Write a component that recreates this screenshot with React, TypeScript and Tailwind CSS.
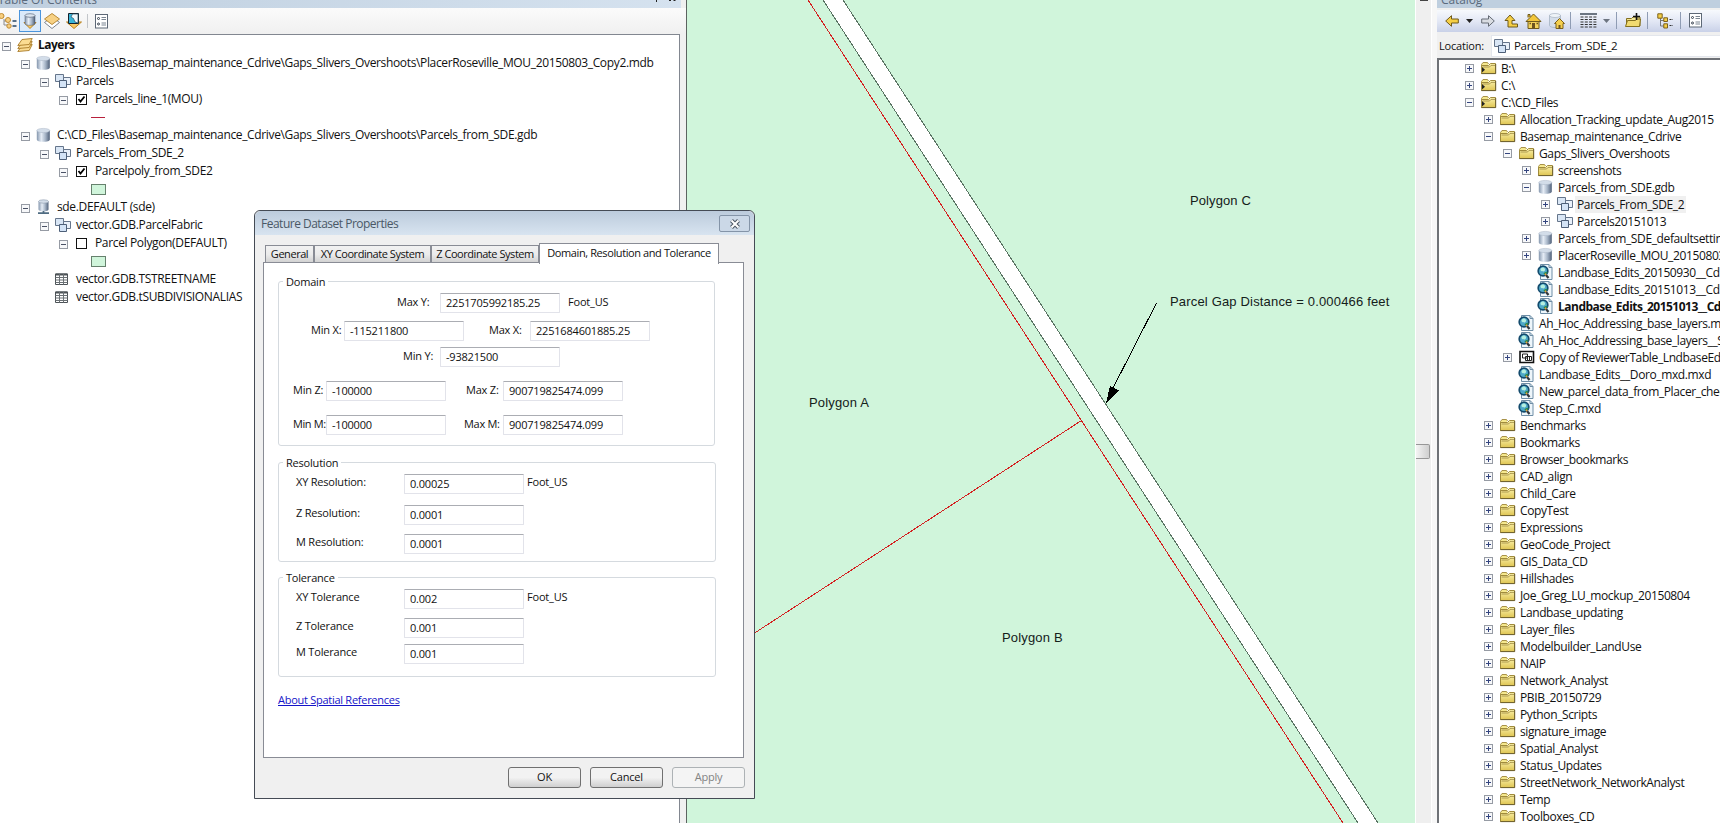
import type { ReactNode } from "react";
import clsx from "clsx";

type IconName = "layers" | "db" | "sde" | "dataset" | "table" | "folder" | "link" | "mxd" | "toolbox";

type TocRow = {
  level: number;
  label?: string;
  icon?: IconName;
  check?: boolean;
  symbol?: "line" | "patch";
  bold?: boolean;
  leaf?: boolean;
};

type CatalogRow = {
  level: number;
  label: string;
  icon: IconName;
  open?: boolean;
  leaf?: boolean;
  bold?: boolean;
  selected?: boolean;
};

const TOC: TocRow[] = [
  { level: 0, label: "Layers", icon: "layers", bold: true },
  {
    level: 1,
    label:
      "C:\\CD_Files\\Basemap_maintenance_Cdrive\\Gaps_Slivers_Overshoots\\PlacerRoseville_MOU_20150803_Copy2.mdb",
    icon: "db",
  },
  { level: 2, label: "Parcels", icon: "dataset" },
  { level: 3, label: "Parcels_line_1(MOU)", check: true },
  { level: 4, symbol: "line" },
  {
    level: 1,
    label: "C:\\CD_Files\\Basemap_maintenance_Cdrive\\Gaps_Slivers_Overshoots\\Parcels_from_SDE.gdb",
    icon: "db",
  },
  { level: 2, label: "Parcels_From_SDE_2", icon: "dataset" },
  { level: 3, label: "Parcelpoly_from_SDE2", check: true },
  { level: 4, symbol: "patch" },
  { level: 1, label: "sde.DEFAULT (sde)", icon: "sde" },
  { level: 2, label: "vector.GDB.ParcelFabric", icon: "dataset" },
  { level: 3, label: "Parcel Polygon(DEFAULT)", check: false },
  { level: 4, symbol: "patch" },
  { level: 2, label: "vector.GDB.TSTREETNAME", icon: "table", leaf: true },
  { level: 2, label: "vector.GDB.tSUBDIVISIONALIAS", icon: "table", leaf: true },
];

const FOLDERS = [
  "Benchmarks",
  "Bookmarks",
  "Browser_bookmarks",
  "CAD_align",
  "Child_Care",
  "CopyTest",
  "Expressions",
  "GeoCode_Project",
  "GIS_Data_CD",
  "Hillshades",
  "Joe_Greg_LU_mockup_20150804",
  "Landbase_updating",
  "Layer_files",
  "Modelbuilder_LandUse",
  "NAIP",
  "Network_Analyst",
  "PBIB_20150729",
  "Python_Scripts",
  "signature_image",
  "Spatial_Analyst",
  "Status_Updates",
  "StreetNetwork_NetworkAnalyst",
  "Temp",
  "Toolboxes_CD",
];

const CATALOG: CatalogRow[] = [
  { level: 0, label: "B:\\", icon: "link" },
  { level: 0, label: "C:\\", icon: "link" },
  { level: 0, label: "C:\\CD_Files", icon: "link", open: true },
  { level: 1, label: "Allocation_Tracking_update_Aug2015", icon: "folder" },
  { level: 1, label: "Basemap_maintenance_Cdrive", icon: "folder", open: true },
  { level: 2, label: "Gaps_Slivers_Overshoots", icon: "folder", open: true },
  { level: 3, label: "screenshots", icon: "folder" },
  { level: 3, label: "Parcels_from_SDE.gdb", icon: "db", open: true },
  { level: 4, label: "Parcels_From_SDE_2", icon: "dataset", selected: true },
  { level: 4, label: "Parcels20151013", icon: "dataset" },
  { level: 3, label: "Parcels_from_SDE_defaultsettings.gdb", icon: "db" },
  { level: 3, label: "PlacerRoseville_MOU_20150803.mdb", icon: "db" },
  { level: 3, label: "Landbase_Edits_20150930__Cdrive.mxd", icon: "mxd", leaf: true },
  { level: 3, label: "Landbase_Edits_20151013__Cdrive.mxd", icon: "mxd", leaf: true },
  { level: 3, label: "Landbase_Edits_20151013__Cdrive.mxd", icon: "mxd", leaf: true, bold: true },
  { level: 2, label: "Ah_Hoc_Addressing_base_layers.mxd", icon: "mxd", leaf: true },
  { level: 2, label: "Ah_Hoc_Addressing_base_layers__SDE.mxd", icon: "mxd", leaf: true },
  { level: 2, label: "Copy of ReviewerTable_LndbaseEdits", icon: "toolbox" },
  { level: 2, label: "Landbase_Edits__Doro_mxd.mxd", icon: "mxd", leaf: true },
  { level: 2, label: "New_parcel_data_from_Placer_check.mxd", icon: "mxd", leaf: true },
  { level: 2, label: "Step_C.mxd", icon: "mxd", leaf: true },
  ...FOLDERS.map((label): CatalogRow => ({ level: 1, label, icon: "folder" })),
];

function Svg({ w = 16, h = 16, children }: { w?: number; h?: number; children: ReactNode }) {
  return (
    <svg width={w} height={h} viewBox={`0 0 ${w} ${h}`} fill="none" className="block shrink-0">
      {children}
    </svg>
  );
}

function Gradients() {
  return (
    <svg width="0" height="0" className="absolute">
      <defs>
        <linearGradient id="steel" x1="0" x2="1" y1="0" y2="0">
          <stop offset="0" stopColor="#8496ad" />
          <stop offset="0.35" stopColor="#e6edf6" />
          <stop offset="0.65" stopColor="#a9b7c9" />
          <stop offset="1" stopColor="#4f6079" />
        </linearGradient>
        <linearGradient id="gold" x1="0" x2="0" y1="0" y2="1">
          <stop offset="0" stopColor="#fbf2ac" />
          <stop offset="1" stopColor="#dfc552" />
        </linearGradient>
      </defs>
    </svg>
  );
}

function FolderShape() {
  return (
    <>
      <path d="M.5 13.5V4.5L2 2.5h4.500l1 1.500" fill="#f5e88d" stroke="#a8924a" />
      <path d="M.5 13.500v-8h7l2-2h5v10z" fill="url(#gold)" stroke="#a08b3c" />
      <path d="M1.500 7h7l1.500-1.600h4" stroke="#8f7a34" strokeWidth="0.700" />
      <path d="M.5 13.600h14.200V4" stroke="#6e6030" />
    </>
  );
}

function Icon({ name }: { name: IconName }) {
  switch (name) {
    case "layers":
      return (
        <Svg>
          {[6, 3, 0].map((y) => (
            <path
              key={y}
              d={`M.8 ${y + 8.500} 5 ${y + 2.500}l10.200-1-3 6z`}
              fill="#fbdc92"
              stroke="#a97a26"
              strokeWidth="0.900"
            />
          ))}
        </Svg>
      );
    case "db":
      return (
        <Svg>
          <path d="M.8 3.500v9c0 1.500 3 2.300 6.500 2.300s6.500-.8 6.500-2.300v-9z" fill="url(#steel)" />
          <ellipse cx="7.300" cy="3.500" rx="6.500" ry="2.100" fill="#d3dde9" stroke="#a9b5c4" strokeWidth="0.500" />
        </Svg>
      );
    case "sde":
      return (
        <Svg>
          <path d="M2.500 2.500v8c0 1.200 2 1.800 5 1.800s5-.6 5-1.800v-8z" fill="url(#steel)" />
          <ellipse cx="7.500" cy="2.500" rx="5" ry="1.700" fill="#d3dde9" stroke="#8d9bad" strokeWidth="0.600" />
          <path d="M7.500 12v2M2 14.200h11" stroke="#4f6c82" strokeWidth="1.800" />
        </Svg>
      );
    case "dataset":
      return (
        <Svg>
          <path d="M.5 1.500h8v7h-8z" fill="#d9e6f5" stroke="#65758b" />
          <path d="M8.500 4.500h7v7h-7z" fill="#eaf1fa" stroke="#65758b" />
          <path d="M4.500 7.500h7v7h-7z" fill="#d3e3f6" stroke="#4d5f78" />
        </Svg>
      );
    case "table":
      return (
        <Svg>
          <path d="M.5 3h12v10.500H.5z" fill="#fff" stroke="#4c5256" />
          <path d="M.5 3.500h12" stroke="#4c5256" strokeWidth="2" />
          <path d="M.5 6.500h12M.5 9h12M.5 11.500h12M4.500 3v10.500M8.500 3v10.500" stroke="#6b7175" />
        </Svg>
      );
    case "folder":
      return (
        <Svg>
          <FolderShape />
        </Svg>
      );
    case "link":
      return (
        <Svg>
          <FolderShape />
          <path d="M1 7l3 2.700-3 2.800z" fill="#222" />
        </Svg>
      );
    case "mxd":
      return (
        <Svg>
          <path d="M3.500.5h8.500l3 3v12H3.500z" fill="#eef6fb" stroke="#6f8ea6" />
          <path d="M12 .5v3h3" stroke="#6f8ea6" />
          <circle cx="6" cy="7" r="4.800" fill="#4fa9c9" stroke="#134a6c" strokeWidth="1.700" />
          <path d="M3.500 5c2-2.500 4-1.500 4.500 0s-1 3-2 2.500-2.500 0-2.500-2.500z" fill="#b5efdf" />
          <path d="M7 10c1-1 2.500-1 3-2" stroke="#2a8a46" strokeWidth="1.600" />
          <path d="M9 11l2.500 3" stroke="#30363c" strokeWidth="2.200" />
          <path d="M8 9.800l1.200 1.300" stroke="#e5a03a" strokeWidth="1.600" />
        </Svg>
      );
    case "toolbox":
      return (
        <Svg>
          <path d="M1 2.500h13.500v11H1z" fill="#fff" stroke="#111" strokeWidth="1.600" />
          <path d="M3.500 5h5v4h-5zM6.500 7.500h6v4h-6z" fill="#fff" stroke="#222" />
          <path d="M8.500 7.500v4M10.500 7.500v4" stroke="#222" />
        </Svg>
      );
  }
}

function Expander({ open, blue }: { open?: boolean; blue?: boolean }) {
  return (
    <Svg w={9} h={9}>
      <rect x="0.5" y="0.5" width="8" height="8" fill="#f7f8fa" stroke="#969ba4" />
      <path d={open ? "M2 4.500h5" : "M2 4.500h5M4.500 2v5"} stroke={blue ? "#34457f" : "#4a5266"} />
    </Svg>
  );
}

function Checkbox({ checked }: { checked: boolean }) {
  return (
    <Svg w={11} h={11}>
      <rect x="0.5" y="0.5" width="10" height="10" fill="#fff" stroke="#111" />
      {checked && <path d="M2.500 5l2 2.500 4-5" stroke="#000" strokeWidth="1.800" />}
    </Svg>
  );
}

function OptionsIcon() {
  return (
    <Svg w={13} h={15}>
      <rect x="0.5" y="0.5" width="12" height="13.500" fill="#fff" stroke="#5d6876" />
      <circle cx="3.500" cy="4.500" r="1" stroke="#35404d" />
      <circle cx="3.500" cy="10" r="1" stroke="#35404d" />
      <path d="M6.500 3.500H11M6.500 5.500H11M6.500 9H11M6.500 11H11" stroke="#7b8591" />
    </Svg>
  );
}

function TocToolbar() {
  return (
    <div className="flex h-[26px] items-center bg-linear-to-b from-[#fbfbfb] to-[#f0f0f0]">
      <Svg w={17}>
        <path d="M4 6v6h6M4 8h6" stroke="#8d8d8d" />
        <circle cx="1.500" cy="3" r="2.500" fill="#f8cf7f" stroke="#c08b30" />
        <circle cx="8" cy="7" r="2.500" fill="#f8cf7f" stroke="#c08b30" />
        <circle cx="9" cy="13" r="2.200" fill="#f8cf7f" stroke="#c08b30" />
        <path d="M12.500 8h4M12.500 13h4" stroke="#234466" strokeWidth="1.600" />
      </Svg>
      <div className="ml-0.5 flex h-[22px] w-[22px] items-center justify-center border border-[#4a94dc] bg-[#dbeafa]">
        <Svg>
          <path d="M2 9.500L8 15.500l6-6z" fill="#f8c865" stroke="#b98322" />
          <path d="M3 2.500v8c0 1.200 2 1.800 5 1.800s5-.6 5-1.800v-8z" fill="url(#steel)" stroke="#49566b" strokeWidth="0.500" />
          <ellipse cx="8" cy="2.500" rx="5" ry="1.800" fill="#dbe5ef" stroke="#49566b" strokeWidth="0.600" />
        </Svg>
      </div>
      <div className="ml-[3px]">
        <Svg>
          <path d="M.5 9.500L8 15.500l7.500-6L8 4z" fill="#fff" stroke="#7b8490" />
          <path d="M.5 6L8 .5 15.500 6 8 11.500z" fill="#f7d184" stroke="#b88a35" />
        </Svg>
      </div>
      <div className="ml-1.5">
        <Svg>
          <path d="M.5 9L8 15.500 15.500 9z" fill="#f8c865" stroke="#b98322" />
          <path d="M2.500.5h10v10h-10z" fill="#39b5d8" stroke="#16222c" />
          <path d="M6.500 1h5.500v9L9 9 7.500 5.500 5 4z" fill="#f3f9fc" stroke="#24506a" strokeWidth="0.700" />
        </Svg>
      </div>
      <div className="ml-[5px] h-3.5 w-px bg-[#c3c6ca]" />
      <div className="ml-[7px]">
        <OptionsIcon />
      </div>
    </div>
  );
}

function TocTreeRow({ row }: { row: TocRow }) {
  return (
    <div
      className="flex h-[18px] shrink-0 items-center"
      style={{ paddingLeft: row.level === 4 ? 91 : 2 + row.level * 19 }}
    >
      {row.symbol === "line" && <div className="h-px w-3.5 bg-[#b8203c]" />}
      {row.symbol === "patch" && <div className="h-[11px] w-[15px] border border-[#66816d] bg-[#d0f5db]" />}
      {row.label && (
        <>
          <div className="mt-0.5 w-[15px] shrink-0">{!row.leaf && <Expander open />}</div>
          <div className="w-[21px] shrink-0">
            {row.icon ? (
              <Icon name={row.icon} />
            ) : (
              <div className="ml-0.5 mt-px">
                <Checkbox checked={row.check === true} />
              </div>
            )}
          </div>
          <span className={clsx("whitespace-pre", row.bold ? "font-bold tracking-[-0.5px]" : "tracking-[-0.35px]")}>
            {row.label}
          </span>
        </>
      )}
    </div>
  );
}

function TableOfContents() {
  return (
    <div className="flex w-[686px] shrink-0 flex-col bg-[#f0f0f0] font-['Open_Sans','Noto_Sans',sans-serif] text-[12px] text-[#111]">
      <div className="flex h-2 w-[681px] items-end justify-between overflow-hidden bg-linear-to-r from-[#bfcfdf] to-[#d5e2ef] text-[#5a6a7c]">
        <span className="-ml-0.5 leading-4 tracking-[-0.1px]">Table Of Contents</span>
        <Svg w={28} h={8}>
          <path d="M3.500 0v2M16 .5h2M20.500.5h2" stroke="#222" />
        </Svg>
      </div>
      <TocToolbar />
      <div className="flex w-[680px] grow flex-col border-t border-r border-[#828790] bg-white pt-px">
        {TOC.map((row, i) => (
          <TocTreeRow key={i} row={row} />
        ))}
      </div>
    </div>
  );
}

function MapView() {
  return (
    <div className="relative w-[729px] shrink-0 border-l border-[#5c6360] bg-[#d0f5db] font-['Liberation_Sans',Arial,sans-serif] text-[13px] text-[#14201a]">
      <svg
        width="728"
        height="823"
        viewBox="687 0 728 823"
        fill="none"
        shapeRendering="crispEdges"
        className="block"
      >
        <path d="M823 0h20l535 823h-20z" fill="#fff" />
        <path d="M823 0l535 823M843 0l535 823" stroke="#5a7363" />
        <path d="M808 0l535 823M1081.500 420.500L750 636" stroke="#d42020" />
        <path d="M1156.500 303l-46 90" stroke="#000" />
        <path d="M1106 403l4-17 9 4.500z" fill="#000" />
      </svg>
      <span className="absolute top-[193px] left-[503px] leading-4 tracking-[0.1px]">Polygon C</span>
      <span className="absolute top-[294px] left-[483px] leading-4 whitespace-nowrap tracking-[0.17px]">
        Parcel Gap Distance = 0.000466 feet
      </span>
      <span className="absolute top-[395px] left-[122px] leading-4 tracking-[0.17px]">Polygon A</span>
      <span className="absolute top-[630px] left-[315px] leading-4 tracking-[0.17px]">Polygon B</span>
    </div>
  );
}

function Splitter() {
  return (
    <div className="flex w-[22px] shrink-0 bg-[#f7f7f7]">
      <div className="flex w-[17px] flex-col border-x border-white bg-[#efefef]">
        <div className="ml-1 h-px w-2 bg-[#444]" />
        <div className="mt-[443px] h-[15px] w-3.5 rounded-r-xs border border-l-0 border-[#979797] bg-linear-to-r from-[#f4f4f4] to-[#cfcfcf]" />
      </div>
    </div>
  );
}

function Separator() {
  return <div className="h-[17px] w-px shrink-0 bg-[#8f9cb4]" />;
}

function Caret({ color }: { color: string }) {
  return (
    <Svg w={7} h={4}>
      <path d="M0 0h7L3.500 4z" fill={color} />
    </Svg>
  );
}

function CatalogToolbar() {
  return (
    <div className="mt-0.5 flex h-[22px] items-center bg-linear-to-b from-[#f7f9fd] via-[#e3e8f5] to-[#c9d1e8] pl-2">
      <Svg w={14} h={12}>
        <path d="M.7 6L6.500.7V4h6.800v4H6.500v3.300z" fill="#f6cf45" stroke="#6f5a1c" />
      </Svg>
      <div className="ml-[7px]">
        <Caret color="#222" />
      </div>
      <div className="ml-2">
        <Svg w={14} h={12}>
          <path d="M13.300 6L7.500.7V4H.7v4h6.800v3.300z" fill="#d9dce2" stroke="#666c76" />
        </Svg>
      </div>
      <div className="ml-[9px]">
        <Svg w={15} h={14}>
          <path d="M1 6.500L6 1l5 5.500H8V10h5.500v3H4V6.500z" fill="#f6cf45" stroke="#6f5a1c" />
        </Svg>
      </div>
      <div className="ml-1.5">
        <Svg w={17}>
          <path d="M3 7.500h11v8H3z" fill="#f3d35c" stroke="#6f5a1c" />
          <path d="M1 8.500L8.500 1 16 8.500z" fill="#f2c63a" stroke="#6f5a1c" />
          <path d="M3 4.500V1.500h2V4" fill="#e8b93a" stroke="#6f5a1c" />
          <path d="M7 10h3v5.500H7z" fill="#6b5320" />
          <path d="M4.500 10.500h1.500M11.500 10.500H13" stroke="#6b5320" strokeWidth="1.500" />
        </Svg>
      </div>
      <div className="ml-[7px]">
        <Svg>
          <path d="M.5 2.500v10c0 1.200 2.500 2 5.500 2s5.500-.8 5.500-2v-10z" fill="#d5deea" stroke="#a5b2c3" strokeWidth="0.800" />
          <ellipse cx="6" cy="2.500" rx="5.500" ry="2" fill="#eef3f8" stroke="#9fabba" strokeWidth="0.600" />
          <path d="M5.500 10.500L10.500 5.500l5 5h-1.500v5h-7v-5z" fill="#f5cf4e" stroke="#7c611c" />
          <path d="M9.500 12h2v3.500h-2z" fill="#6b5320" />
        </Svg>
      </div>
      <div className="mx-[5px]">
        <Separator />
      </div>
      <div className="ml-1">
        <Svg w={17} h={15}>
          <path d="M0 1h17" stroke="#4b5563" strokeWidth="1.600" />
          <path d="M.5 4h16M.5 6.500h16M.5 9h16M.5 11.500h16M.5 14h16" stroke="#333" strokeDasharray="3 1.300" />
        </Svg>
      </div>
      <div className="ml-1.5">
        <Caret color="#6c7480" />
      </div>
      <div className="mr-2 ml-1.5">
        <Separator />
      </div>
      <Svg w={17} h={15}>
        <path d="M1.500 13V5.500h5l1.500-1.500h7V13z" fill="url(#gold)" stroke="#84701f" />
        <path d="M.5 13.500l2-6h8l1.500-1.500h3.500l-1 7.500z" fill="#f1da70" stroke="#84701f" />
        <path d="M11.500 0v7M8 3.500h7" stroke="#111" strokeWidth="1.600" />
      </Svg>
      <div className="mr-[9px] ml-[5px]">
        <Separator />
      </div>
      <Svg w={17}>
        <path d="M3.500 5v8h5M3.500 7.500h4" stroke="#777" />
        <path d="M.8.800h4.400v4.400H.8zM6.800 4.800h3.700v3.700H6.800zM6.800 10.800h3.700v4.200H6.800z" fill="#f6cf45" stroke="#7c611c" />
        <path d="M12.500 6.500h3.500M12.500 12.500h3.500" stroke="#333" strokeDasharray="2 1" />
      </Svg>
      <div className="mr-2 ml-1.5">
        <Separator />
      </div>
      <OptionsIcon />
    </div>
  );
}

function CatalogTreeRow({ row }: { row: CatalogRow }) {
  return (
    <div className="flex h-[17px] shrink-0 items-center" style={{ paddingLeft: 26 + row.level * 19 }}>
      <div className="w-4 shrink-0">{!row.leaf && <Expander open={row.open} blue />}</div>
      <div className={clsx("shrink-0", row.icon === "mxd" ? "-ml-px w-[19px]" : "w-[18px]")}>
        <Icon name={row.icon} />
      </div>
      <span
        className={clsx(
          "h-[17px] px-0.5 leading-[17px] whitespace-pre",
          row.bold ? "font-bold tracking-[-0.5px]" : "tracking-[-0.38px]",
          row.selected && "bg-[#f0f0f0]",
        )}
      >
        {row.label}
      </span>
    </div>
  );
}

function Catalog() {
  return (
    <div className="flex min-w-0 grow flex-col bg-[#f0f0f0] font-['Open_Sans','Noto_Sans',sans-serif] text-[12px] text-[#111]">
      <div className="flex h-2 items-end overflow-hidden bg-[#bfcfdf] pl-1 text-[#5a6a7c]">
        <span className="leading-4 tracking-[-0.1px]">Catalog</span>
      </div>
      <CatalogToolbar />
      <div className="mt-[3px] flex h-[22px] items-center">
        <span className="w-[54px] pl-0.5 text-[11px] tracking-[-0.2px]">Location:</span>
        <div className="flex h-[22px] grow items-center border border-r-0 border-[#e3e6ec] bg-white pl-0.5">
          <Icon name="dataset" />
          <span className="pl-1 text-[11.5px] tracking-[-0.33px]">Parcels_From_SDE_2</span>
        </div>
      </div>
      <div className="mt-px flex grow flex-col overflow-hidden border-t-2 border-l-2 border-[#6f7277] bg-white">
        {CATALOG.map((row, i) => (
          <CatalogTreeRow key={i} row={row} />
        ))}
      </div>
    </div>
  );
}

function Field({ value }: { value: string }) {
  return (
    <div className="flex h-5 w-[120px] shrink-0 items-center rounded-[1px] border border-[#e2e3ea] border-t-[#abadb3] bg-white pl-[5px] tracking-[-0.2px]">
      {value}
    </div>
  );
}

function Group({ title, className, children }: { title: string; className: string; children: ReactNode }) {
  return (
    <div className={clsx("relative flex flex-col rounded-[3px] border border-[#d5dadf]", className)}>
      <span className="absolute -top-2 left-1 bg-white px-[3px] leading-4">{title}</span>
      {children}
    </div>
  );
}

// One "label: field unit" line inside the resolution and tolerance groups.
function ValueRow({ label, value, unit, className }: { label: string; value: string; unit?: string; className: string }) {
  return (
    <div className={clsx("flex h-5 items-center pl-[17px]", className)}>
      <span className="mb-1 w-[108px]">{label}</span>
      <Field value={value} />
      {unit && <span className="mb-1 pl-[3px]">{unit}</span>}
    </div>
  );
}

function Tab({ label, active, className }: { label: string; active?: boolean; className: string }) {
  return (
    <div
      className={clsx(
        "flex items-center justify-center border border-b-0 border-[#898c95] whitespace-nowrap",
        active
          ? "z-10 -mb-px h-[21px] bg-white tracking-[-0.4px]"
          : "h-[18px] bg-linear-to-b from-[#f2f2f2] via-[#ebebeb] to-[#cfcfcf] tracking-[-0.45px]",
        className,
      )}
    >
      {label}
    </div>
  );
}

function DialogButton({ label, disabled }: { label: string; disabled?: boolean }) {
  return (
    <button
      className={clsx(
        "flex h-[21px] w-[73px] items-center justify-center rounded-[3px] border",
        disabled
          ? "border-[#adb2b5] bg-[#f4f4f4] text-[#838383]"
          : "border-[#707070] bg-linear-to-b from-[#f2f2f2] from-50% to-[#cfcfcf]",
      )}
    >
      {label}
    </button>
  );
}

function PropertiesDialog() {
  return (
    <div className="absolute top-[210px] left-[254px] flex h-[589px] w-[501px] flex-col rounded-t-md border border-[#454b55] bg-[#f0f0f0] font-['Open_Sans','Noto_Sans',sans-serif] text-[11px] tracking-[-0.2px] whitespace-nowrap text-[#111]">
      <div className="flex h-6 shrink-0 justify-between rounded-t-md bg-linear-to-b from-[#bccbdc] to-[#d8e4f0] pr-1 pl-1.5">
        <span className="pt-px text-[12px] leading-6 tracking-[-0.5px] text-[#4a5866]">
          Feature Dataset Properties
        </span>
        <div className="mt-1 flex h-[17px] w-[31px] items-center justify-center rounded-[2px] border border-[#8494a8] bg-[#cbd8e7]">
          <Svg w={12} h={10}>
            <path d="M2.500 1.500l7 7M9.500 1.500l-7 7" stroke="#4d5663" strokeWidth="4" />
            <path d="M2.500 1.500l7 7M9.500 1.500l-7 7" stroke="#fff" strokeWidth="2" />
          </Svg>
        </div>
      </div>

      <div className="mt-[7px] flex h-[21px] shrink-0 items-end pl-2.5">
        <Tab label="General" className="w-[49px]" />
        <Tab label="XY Coordinate System" className="w-[117px]" />
        <Tab label="Z Coordinate System" className="w-[108px]" />
        <Tab label="Domain, Resolution and Tolerance" active className="w-[180px] pb-0.5" />
      </div>

      <div className="-mt-px ml-2 flex h-[496px] w-[481px] shrink-0 flex-col border border-[#898c95] bg-white pl-3.5">
        <Group title="Domain" className="mt-[18px] h-[165px] w-[437px]">
          <div className="mt-[11px] flex h-5 items-center pl-[118px]">
            <span className="mb-px w-[43px]">Max Y:</span>
            <Field value="2251705992185.25" />
            <span className="mb-px pl-2">Foot_US</span>
          </div>
          <div className="mt-2 flex h-5 items-center pl-8">
            <span className="mb-px w-[33px]">Min X:</span>
            <Field value="-115211800" />
            <span className="mb-px w-[66px] pl-[25px]">Max X:</span>
            <Field value="2251684601885.25" />
          </div>
          <div className="mt-1.5 flex h-5 items-center pl-[124px]">
            <span className="mb-px w-[37px]">Min Y:</span>
            <Field value="-93821500" />
          </div>
          <div className="mt-3.5 flex h-5 items-center pl-3.5">
            <span className="mb-px w-[33px]">Min Z:</span>
            <Field value="-100000" />
            <span className="mb-px w-[57px] pl-5">Max Z:</span>
            <Field value="900719825474.099" />
          </div>
          <div className="mt-3.5 flex h-5 items-center pl-3.5">
            <span className="mb-px w-[33px] tracking-[-0.4px]">Min M:</span>
            <Field value="-100000" />
            <span className="mb-px w-[57px] pl-[18px] tracking-[-0.3px]">Max M:</span>
            <Field value="900719825474.099" />
          </div>
        </Group>

        <Group title="Resolution" className="mt-4 h-[100px] w-[438px]">
          <ValueRow label="XY Resolution:" value="0.00025" unit="Foot_US" className="mt-[11px]" />
          <ValueRow label="Z Resolution:" value="0.0001" className="mt-[11px]" />
          <ValueRow label="M Resolution:" value="0.0001" className="mt-[9px]" />
        </Group>

        <Group title="Tolerance" className="mt-[15px] h-[100px] w-[438px]">
          <ValueRow label="XY Tolerance" value="0.002" unit="Foot_US" className="mt-[11px]" />
          <ValueRow label="Z Tolerance" value="0.001" className="mt-[9px]" />
          <ValueRow label="M Tolerance" value="0.001" className="mt-1.5" />
        </Group>

        <a className="mt-[15px] self-start leading-4 tracking-[-0.27px] text-[#1414c8] underline">
          About Spatial References
        </a>
      </div>

      <div className="mt-[9px] flex justify-end gap-[9px] pr-[9px]">
        <DialogButton label="OK" />
        <DialogButton label="Cancel" />
        <DialogButton label="Apply" disabled />
      </div>
    </div>
  );
}

export default function App() {
  return (
    <div className="relative flex h-[823px] w-[1720px] overflow-hidden bg-[#f0f0f0]">
      <Gradients />
      <TableOfContents />
      <MapView />
      <Splitter />
      <Catalog />
      <PropertiesDialog />
    </div>
  );
}
